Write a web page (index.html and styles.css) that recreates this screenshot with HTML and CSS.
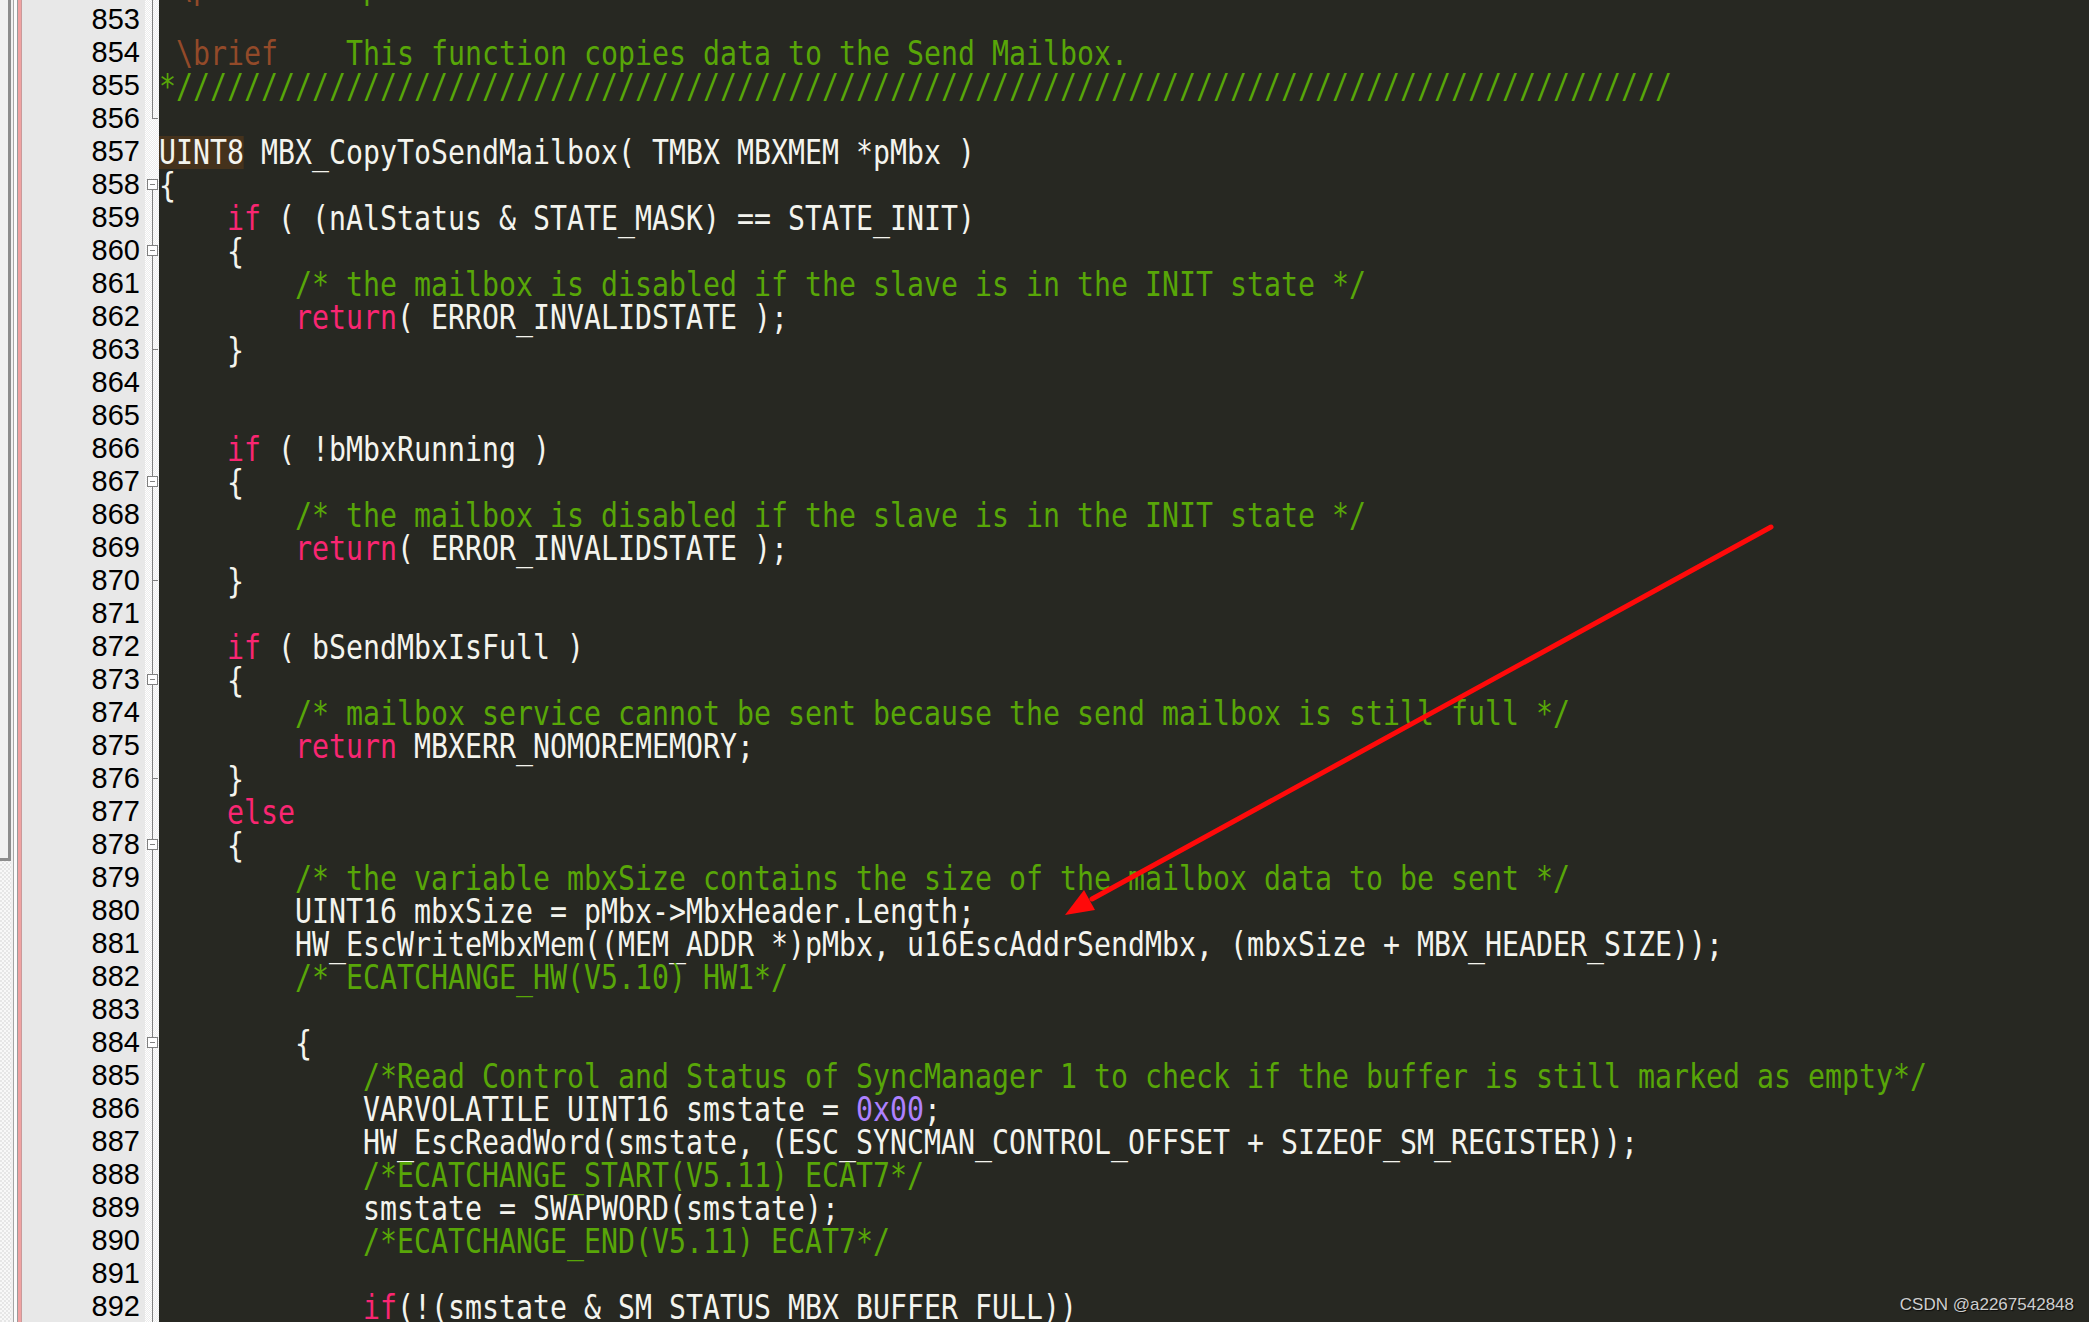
FILE: index.html
```
<!DOCTYPE html>
<html>
<head>
<meta charset="utf-8">
<title>mailbox.c</title>
<link rel="stylesheet" href="styles.css">
</head>
<body>
<div class="editor">
  <div class="rail">
    <div class="rail-a"><div class="rail-panel"></div></div>
    <div class="rail-b"></div>
  </div>
  <div class="rows">
    <div class="gutter">
      <div class="num">852</div><div class="num">853</div><div class="num">854</div><div class="num">855</div><div class="num">856</div><div class="num">857</div><div class="num">858</div><div class="num">859</div><div class="num">860</div><div class="num">861</div><div class="num">862</div><div class="num">863</div><div class="num">864</div><div class="num">865</div><div class="num">866</div><div class="num">867</div><div class="num">868</div><div class="num">869</div><div class="num">870</div><div class="num">871</div><div class="num">872</div><div class="num">873</div><div class="num">874</div><div class="num">875</div><div class="num">876</div><div class="num">877</div><div class="num">878</div><div class="num">879</div><div class="num">880</div><div class="num">881</div><div class="num">882</div><div class="num">883</div><div class="num">884</div><div class="num">885</div><div class="num">886</div><div class="num">887</div><div class="num">888</div><div class="num">889</div><div class="num">890</div><div class="num">891</div><div class="num">892</div>
    </div>
    <div class="fold">
      <div class="f v"></div>
      <div class="f v"></div>
      <div class="f v"></div>
      <div class="f v"></div>
      <div class="f end"></div>
      <div class="f"></div>
      <div class="f box first"><span class="fb"></span></div>
      <div class="f v"></div>
      <div class="f box"><span class="fb"></span></div>
      <div class="f v"></div>
      <div class="f v"></div>
      <div class="f tee"></div>
      <div class="f v"></div>
      <div class="f v"></div>
      <div class="f v"></div>
      <div class="f box"><span class="fb"></span></div>
      <div class="f v"></div>
      <div class="f v"></div>
      <div class="f tee"></div>
      <div class="f v"></div>
      <div class="f v"></div>
      <div class="f box"><span class="fb"></span></div>
      <div class="f v"></div>
      <div class="f v"></div>
      <div class="f tee"></div>
      <div class="f v"></div>
      <div class="f box"><span class="fb"></span></div>
      <div class="f v"></div>
      <div class="f v"></div>
      <div class="f v"></div>
      <div class="f v"></div>
      <div class="f v"></div>
      <div class="f box"><span class="fb"></span></div>
      <div class="f v"></div>
      <div class="f v"></div>
      <div class="f v"></div>
      <div class="f v"></div>
      <div class="f v"></div>
      <div class="f v"></div>
      <div class="f v"></div>
      <div class="f v"></div>
    </div>
    <div class="code">
      <div class="src">
        <div class="ln"><span class="cm"> </span><span class="dk">\param</span><span class="cm">     pMbx        Pointer to a Mailbox command to be sent</span></div>
        <div class="ln"></div>
        <div class="ln"><span class="cm"> </span><span class="dk">\brief</span><span class="cm">    This function copies data to the Send Mailbox.</span></div>
        <div class="ln"><span class="cm">*////////////////////////////////////////////////////////////////////////////////////////</span></div>
        <div class="ln"></div>
        <div class="ln"><span class="hl">UINT8</span> MBX_CopyToSendMailbox( TMBX MBXMEM *pMbx )</div>
        <div class="ln">{</div>
        <div class="ln">    <span class="kw">if</span> ( (nAlStatus &amp; STATE_MASK) == STATE_INIT)</div>
        <div class="ln">    {</div>
        <div class="ln">        <span class="cm">/* the mailbox is disabled if the slave is in the INIT state */</span></div>
        <div class="ln">        <span class="kw">return</span>( ERROR_INVALIDSTATE );</div>
        <div class="ln">    }</div>
        <div class="ln"></div>
        <div class="ln"></div>
        <div class="ln">    <span class="kw">if</span> ( !bMbxRunning )</div>
        <div class="ln">    {</div>
        <div class="ln">        <span class="cm">/* the mailbox is disabled if the slave is in the INIT state */</span></div>
        <div class="ln">        <span class="kw">return</span>( ERROR_INVALIDSTATE );</div>
        <div class="ln">    }</div>
        <div class="ln"></div>
        <div class="ln">    <span class="kw">if</span> ( bSendMbxIsFull )</div>
        <div class="ln">    {</div>
        <div class="ln">        <span class="cm">/* mailbox service cannot be sent because the send mailbox is still full */</span></div>
        <div class="ln">        <span class="kw">return</span> MBXERR_NOMOREMEMORY;</div>
        <div class="ln">    }</div>
        <div class="ln">    <span class="kw">else</span></div>
        <div class="ln">    {</div>
        <div class="ln">        <span class="cm">/* the variable mbxSize contains the size of the mailbox data to be sent */</span></div>
        <div class="ln">        UINT16 mbxSize = pMbx-&gt;MbxHeader.Length;</div>
        <div class="ln">        HW_EscWriteMbxMem((MEM_ADDR *)pMbx, u16EscAddrSendMbx, (mbxSize + MBX_HEADER_SIZE));</div>
        <div class="ln">        <span class="cm">/* ECATCHANGE_HW(V5.10) HW1*/</span></div>
        <div class="ln"></div>
        <div class="ln">        {</div>
        <div class="ln">            <span class="cm">/*Read Control and Status of SyncManager 1 to check if the buffer is still marked as empty*/</span></div>
        <div class="ln">            VARVOLATILE UINT16 smstate = <span class="nm">0x00</span>;</div>
        <div class="ln">            HW_EscReadWord(smstate, (ESC_SYNCMAN_CONTROL_OFFSET + SIZEOF_SM_REGISTER));</div>
        <div class="ln">            <span class="cm">/*ECATCHANGE_START(V5.11) ECAT7*/</span></div>
        <div class="ln">            smstate = SWAPWORD(smstate);</div>
        <div class="ln">            <span class="cm">/*ECATCHANGE_END(V5.11) ECAT7*/</span></div>
        <div class="ln"></div>
        <div class="ln">            <span class="kw">if</span>(!(smstate &amp; SM_STATUS_MBX_BUFFER_FULL))</div>
      </div>
    </div>
  </div>
  <svg class="arrow" width="2089" height="1322" viewBox="0 0 2089 1322">
    <line x1="1771" y1="527" x2="1092" y2="899" stroke="#ff0a0a" stroke-width="5" stroke-linecap="round"/>
    <polygon points="1065,915 1095,910 1084,890" fill="#ff0a0a"/>
  </svg>
  <div class="watermark">CSDN @a2267542848</div>
</div>
</body>
</html>
```
FILE: styles.css
```
html, body {
  margin: 0;
  padding: 0;
  height: 100%;
  overflow: hidden;
  background: #272822;
}

.editor {
  position: relative;
  display: flex;
  height: 1322px;
  overflow: hidden;
}

/* left window chrome */
.rail {
  flex: none;
  display: flex;
  width: 22px;
}

.rail-a {
  width: 11px;
  background: repeating-conic-gradient(#f8f8f8 0 25%, #e6e6e6 0 50%) 0 0 / 4px 4px;
}

.rail-panel {
  width: 8px;
  height: 858px;
  background: #f0f0f0;
  border-right: 3px solid #8c8c8c;
  border-bottom: 3px solid #8c8c8c;
}

.rail-b {
  width: 11px;
  background: linear-gradient(to right,
    #f0f0f0 0 2px,
    #a6a6a6 2px 3px,
    #fbfbfb 3px 6px,
    #9a9a9a 6px 7px,
    #f0a2a2 7px 10px,
    #c99a9a 10px 11px);
}

.rows {
  flex: 1;
  display: flex;
  align-items: flex-start;
  margin-top: -30px;
}

/* line numbers */
.gutter {
  flex: none;
  align-self: stretch;
  width: 123px;
  box-sizing: border-box;
  padding-right: 5px;
  background: #e8e8e8;
  text-align: right;
  font-family: "Liberation Sans", Arial, sans-serif;
  font-size: 29px;
  line-height: 33px;
  color: #000;
}

.num {
  height: 33px;
}

/* fold margin */
.fold {
  flex: none;
  align-self: stretch;
  width: 14px;
  background: repeating-conic-gradient(#ffffff 0 25%, #ececec 0 50%) 0 0 / 2px 2px;
}

.f {
  height: 33px;
  display: flex;
  align-items: center;
  padding-left: 2px;
  box-sizing: border-box;
  background-repeat: no-repeat;
}

.f.v,
.f.box {
  background-image: linear-gradient(#808080, #808080);
  background-position: 7px 0;
  background-size: 1px 100%;
}

.f.box.first {
  background-position: 7px 17px;
  background-size: 1px 16px;
}

.f.end {
  background-image: linear-gradient(#808080, #808080), linear-gradient(#808080, #808080);
  background-position: 7px 0, 7px 16px;
  background-size: 1px 17px, 6px 1px;
}

.f.tee {
  background-image: linear-gradient(#808080, #808080), linear-gradient(#808080, #808080);
  background-position: 7px 0, 7px 16px;
  background-size: 1px 100%, 6px 1px;
}

.fb {
  display: block;
  width: 11px;
  height: 11px;
  box-sizing: border-box;
  border: 1px solid #808080;
  background: linear-gradient(#808080, #808080) center / 5px 1px no-repeat, #ffffff;
}

/* code area */
.code {
  flex: 1;
  align-self: stretch;
  min-width: 0;
  background: #272822;
  overflow: hidden;
  padding-top: 1px;
}

.src {
  width: 2400px;
  transform: scaleX(0.8305);
  transform-origin: 0 0;
  font-family: "DejaVu Sans Mono", "Liberation Mono", monospace;
  font-size: 34px;
  line-height: 33px;
  color: #f4f4ee;
}

.ln {
  height: 33px;
  white-space: pre;
}

.cm { color: #58a608; }
.dk { color: #934a29; }
.kw { color: #f92672; }
.nm { color: #ae81ff; }

.hl {
  display: inline-block;
  vertical-align: top;
  height: 33px;
  background: #45321c;
}

/* annotation overlay */
.arrow {
  position: absolute;
  left: 0;
  top: 0;
  pointer-events: none;
}

.watermark {
  position: absolute;
  right: 15px;
  bottom: 7px;
  font-family: "Liberation Sans", Arial, sans-serif;
  font-size: 17px;
  line-height: 20px;
  color: #cfcfcf;
  text-shadow: 1px 1px 1px rgba(0, 0, 0, 0.7);
}
```
